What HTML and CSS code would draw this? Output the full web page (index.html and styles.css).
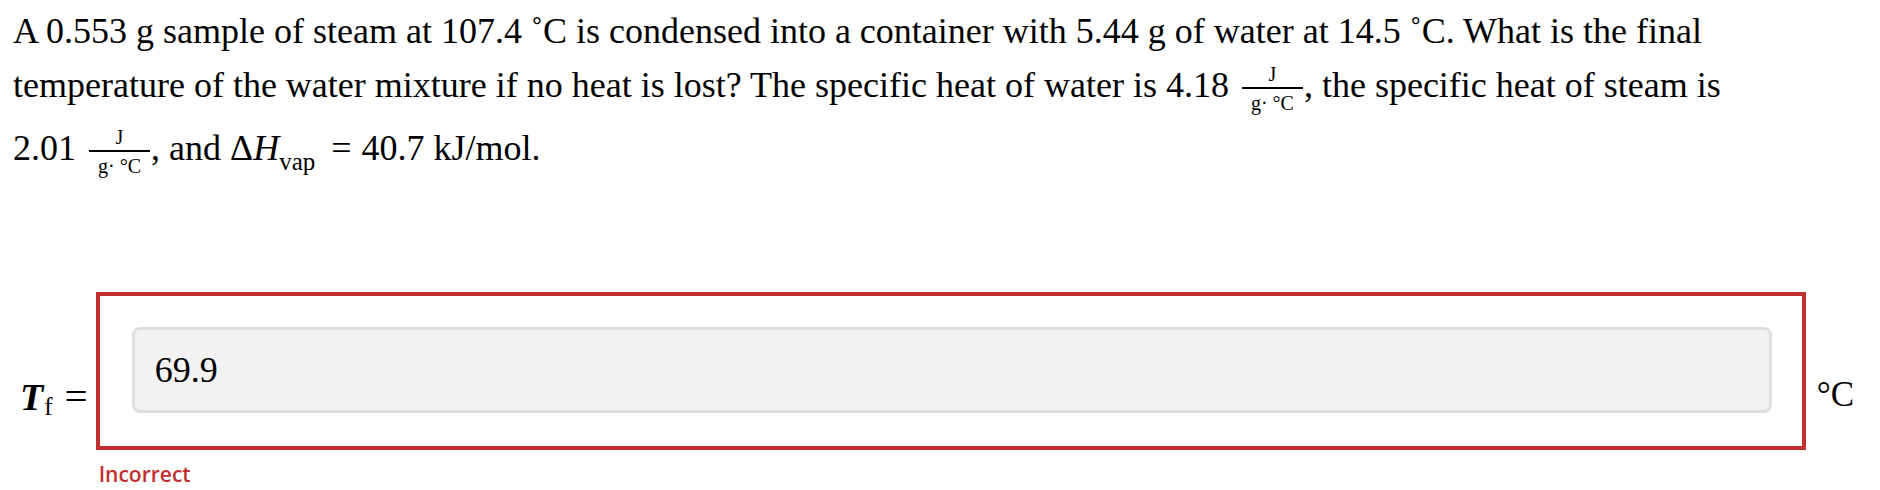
FILE: index.html
```html
<!DOCTYPE html>
<html lang="en">
<head>
<meta charset="utf-8">
<title>Question</title>
<link rel="stylesheet" href="styles.css">
</head>
<body>
<div class="page">
  <p class="question">A 0.553 g sample of steam at 107.4 ˚C is condensed into a container with 5.44 g of water at 14.5 ˚C. What is the final temperature of the water mixture if no heat is lost? The specific heat of water is 4.18 <span class="frac"><span class="num">J</span><span class="den">g· °C</span></span>, the specific heat of steam is 2.01 <span class="frac"><span class="num">J</span><span class="den">g· °C</span></span>, and <span class="math">Δ<i class="mi">H</i><span class="sub">vap</span><span class="eq">=</span>40.7 kJ/mol</span>.</p>

  <div class="answer">
    <div class="label"><i class="mi t">T</i><span class="sub-f">f</span><span class="eq2">=</span></div>
    <div class="box">
      <div class="field">69.9</div>
    </div>
    <div class="unit">°C</div>
    <div class="feedback">Incorrect</div>
  </div>
</div>
</body>
</html>
```

FILE: styles.css
```css
html, body {
  margin: 0;
  padding: 0;
  background: #ffffff;
}

body {
  font-family: "Liberation Serif", "Times New Roman", serif;
  color: #000000;
}

.page {
  width: 1880px;
  height: 490px;
  overflow: hidden;
}

.question {
  margin: 0;
  padding: 4px 0 0 13px;
  width: 1750px;
  font-size: 36px;
  line-height: 54px;
}

.frac {
  display: inline-flex;
  flex-direction: column;
  align-items: center;
  vertical-align: middle;
  font-size: 20px;
  line-height: 1;
  margin: 0 1px 0 4px;
}

.num {
  padding: 0 4px 3px;
}

.den {
  border-top: 2px solid #000000;
  padding: 4px 9px 0;
}

.math {
  display: inline-block;
  padding-top: 8px;
}

.mi {
  font-style: italic;
}

.math .sub {
  font-size: 25px;
  line-height: 1;
  vertical-align: -10px;
}

.eq {
  margin: 0 10px 0 16px;
}

.answer {
  display: grid;
  grid-template-columns: auto 1fr auto;
  column-gap: 8px;
  padding: 0 26px 0 20px;
  margin-top: 116px;
}

.label {
  font-size: 38px;
  line-height: 38px;
  padding-top: 85px;
  white-space: nowrap;
}

.t {
  font-weight: bold;
}

.sub-f {
  font-size: 25px;
  line-height: 1;
  vertical-align: -5px;
  margin-left: 1px;
}

.eq2 {
  font-size: 41px;
  margin-left: 12px;
}

.box {
  border: 4px solid #c1302e;
  padding: 31px 30px 33px 32px;
}

.field {
  box-sizing: border-box;
  height: 86px;
  border: 3px solid #dedede;
  border-radius: 8px;
  background: #f2f2f2;
  padding-left: 20px;
  display: flex;
  align-items: center;
  font-size: 36px;
}

.unit {
  font-size: 35px;
  line-height: 35px;
  padding-top: 85px;
  margin-left: 3px;
}

.feedback {
  grid-column: 2;
  font-family: "Open Sans", "Liberation Sans", sans-serif;
  font-weight: 600;
  font-size: 21px;
  line-height: 24px;
  color: #c1302e;
  margin-top: 12px;
  padding-left: 3px;
}
```
